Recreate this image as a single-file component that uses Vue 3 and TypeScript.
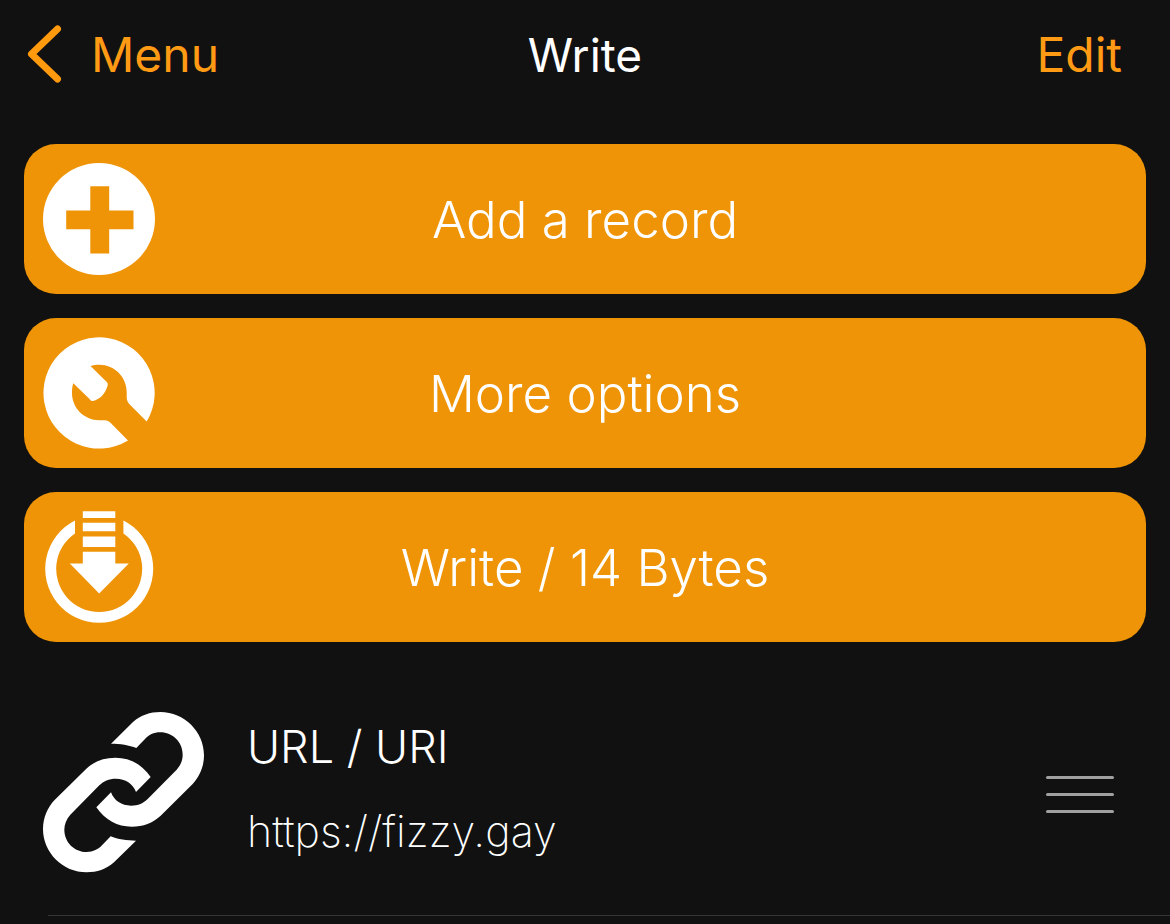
<script setup lang="ts">
interface Action {
  id: string
  label: string
  shapes: string[]
}

const actions: Action[] = [
  {
    id: 'add',
    label: 'Add a record',
    shapes: [
      'M56 0A56 56 0 1 1 56 112A56 56 0 1 1 56 0ZM47.3 23.2V47.5H23.2V66.2H47.3V90.4H66.2V66.2H90.5V47.5H66.2V23.2Z',
    ],
  },
  {
    id: 'options',
    label: 'More options',
    shapes: [
      'M103.7 84.6A55.6 55.6 0 1 0 85 103.4L69.7 88C67.5 85.7 65.5 83.6 62 83.3H56.3C41 83 29 71 29 56C29 52 29.4 49 30.3 46.3L46.3 61.7C47.6 63.2 48.6 64.4 50 64C57 62 61.5 57.5 64 50.5C65.3 47.4 65 46 63 44.3L47.5 29C50 28 53 27.7 56.3 27.7C71.5 27.7 83.7 40 83.7 55V60.7C83.9 64.5 85.5 66.2 88 68.7Z',
    ],
  },
  {
    id: 'write',
    label: 'Write / 14 Bytes',
    shapes: [
      'M32 9.5A54 54 0 1 0 80.4 9.5V22.4A43 43 0 1 1 32 22.4Z',
      'M39.8 0.3H72.3V7H39.8ZM39.8 11.8H72.3V20.3H39.8ZM39.8 25.4H72.3V36H39.8Z',
      'M39.8 40.8H72.3V52.6H85.8L56.2 82.4L26.8 52.6H39.8Z',
    ],
  },
]

const records = [{ id: 1, type: 'URL / URI', value: 'https://fizzy.gay' }]

const linkHalf =
  'M243 131L309 66C333 45 360 36 391 36C463 36 522 95 522 166C522 200 508 230 488 252L392 347C368 369 340 380 305 380C262 380 226 361 199 322L243 277C252 302 275 317 303 317C325 317 340 310 353 297L440 209C452 195 458 181 458 164C458 126 428 97 391 97C371 97 356 105 345 117L319 144C298 135 270 131 243 131Z'
</script>

<template>
  <div class="screen">
    <header class="bar">
      <button type="button" class="nav back">
        <svg class="chevron" viewBox="0 0 36 58" aria-hidden="true">
          <path d="M30.5 4L4.5 29L30.5 54" />
        </svg>
        <span class="nav-label">Menu</span>
      </button>
      <h1 class="title">Write</h1>
      <button type="button" class="nav edit"><span class="nav-label">Edit</span></button>
    </header>

    <main>
      <div class="actions">
        <button v-for="action in actions" :key="action.id" type="button" class="action">
          <svg class="action-icon" viewBox="0 0 112 112" aria-hidden="true">
            <path v-for="shape in action.shapes" :key="shape" :d="shape" fill-rule="evenodd" />
          </svg>
          <span class="action-label">{{ action.label }}</span>
        </button>
      </div>

      <ul class="records">
        <li v-for="record in records" :key="record.id" class="record">
          <svg class="record-icon" viewBox="39 36 483 483" aria-hidden="true">
            <path :d="linkHalf" />
            <path :d="linkHalf" transform="rotate(180 280.5 276.5)" />
          </svg>
          <div class="record-text">
            <h2 class="record-type">{{ record.type }}</h2>
            <p class="record-value">{{ record.value }}</p>
          </div>
          <button type="button" class="handle" aria-label="Reorder">
            <span class="line"></span>
            <span class="line"></span>
            <span class="line"></span>
          </button>
        </li>
      </ul>
    </main>
  </div>
</template>

<style>
body {
  margin: 0;
  background: #111111;
}
</style>

<style scoped>
.screen {
  min-height: 100vh;
  box-sizing: border-box;
  background: #111111;
  color: #ffffff;
  font-family: Inter, "Liberation Sans", sans-serif;
}

button {
  margin: 0;
  padding: 0;
  border: 0;
  background: none;
  color: inherit;
  font: inherit;
  cursor: pointer;
}

.bar {
  display: grid;
  grid-template-columns: 1fr auto 1fr;
  align-items: center;
  height: 108px;
  padding: 0 48px 0 27px;
}

.nav {
  color: #ff9a15;
  font-size: 48px;
  line-height: 60px;
}

.nav-label {
  display: block;
  padding-top: 2px;
}

.back {
  display: flex;
  align-items: center;
  justify-self: start;
  gap: 28px;
}

.chevron {
  width: 36px;
  height: 58px;
  fill: none;
  stroke: #ff9a0f;
  stroke-width: 7;
  stroke-linecap: round;
  stroke-linejoin: round;
}

.title {
  margin: 0 0 0 21px;
  padding-top: 2px;
  font-size: 46px;
  font-weight: 400;
  line-height: 60px;
}

.edit {
  justify-self: end;
}

.actions {
  display: flex;
  flex-direction: column;
  gap: 24px;
  padding: 36px 24px 0;
}

.action {
  display: grid;
  grid-template-columns: 112px 1fr 112px;
  align-items: center;
  height: 150px;
  padding: 0 19px;
  border-radius: 32px;
  background: #ee9406;
}

.action-icon {
  width: 112px;
  height: 112px;
  fill: #ffffff;
}

.action-label {
  padding-top: 2px;
  font-size: 51px;
  font-weight: 300;
  line-height: 64px;
  text-align: center;
}

.records {
  margin: 0;
  padding: 0 0 0 48px;
  list-style: none;
}

.record {
  display: flex;
  align-items: center;
  height: 273px;
  padding-right: 56px;
  border-bottom: 1px solid #363636;
}

.record-icon {
  flex: none;
  width: 161px;
  height: 161px;
  margin: 28px 43px 0 -5px;
  fill: #ffffff;
}

.record-text {
  flex: 1;
  min-width: 0;
  padding-top: 20px;
}

.record-type {
  margin: 0 0 24px;
  font-size: 45px;
  font-weight: 300;
  line-height: 60px;
}

.record-value {
  margin: 0;
  font-size: 43px;
  font-weight: 200;
  line-height: 60px;
}

.handle {
  display: flex;
  flex-direction: column;
  gap: 14px;
  width: 68px;
  margin-top: 31px;
}

.line {
  height: 3px;
  border-radius: 2px;
  background: #a0a0a0;
}
</style>
